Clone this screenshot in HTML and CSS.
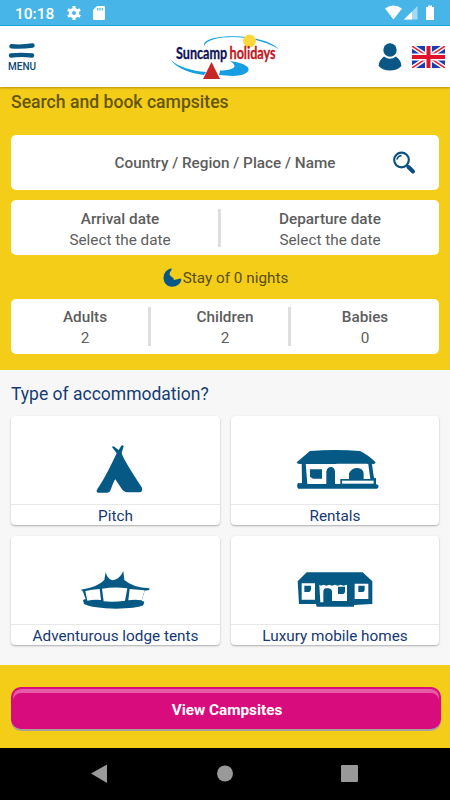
FILE: index.html
```html
<!DOCTYPE html>
<html lang="en">
<head>
    <meta charset="UTF-8">
    <meta name="viewport" content="width=device-width, initial-scale=1.0">
    <title>Suncamp holidays</title>
    <link rel="stylesheet" href="styles.css">
</head>
<body>
    <div class="status-bar">
        <span class="clock">10:18</span>
        <svg class="gear" width="14" height="14" viewBox="0 0 14 14">
            <circle cx="7" cy="7" r="3.6" fill="none" stroke="#fff" stroke-width="3.2"/>
            <path d="M7 0v3M7 11v3M.9 3.5l2.6 1.5M10.5 9l2.6 1.5M.9 10.5L3.5 9M10.5 5l2.6-1.5" stroke="#fff" stroke-width="3"/>
        </svg>
        <svg class="sd" width="12" height="14" viewBox="0 0 12 14">
            <path d="M4 0h7q1 0 1 1v12q0 1-1 1H1q-1 0-1-1V4z" fill="#fff"/>
            <path d="M4.8 2v2.5M7 2v2.5M9.3 2v2.5" stroke="#47b5e8" stroke-width="1.2"/>
        </svg>
        <svg class="signals" width="50" height="16" viewBox="0 0 50 16">
            <path d="M0 3.5Q8.300-2.500 17 3.500L8.500 14.500z" fill="#fff"/>
            <path d="M32.500 1v13.500H19z" fill="#a6daf4"/>
            <path d="M27 6.500v8h-8z" fill="#fff"/>
            <path d="M43 .5h4V2h2v12.500q0 .5-.5.500h-7q-.5 0-.5-.5V2h2z" fill="#fff"/>
        </svg>
    </div>

    <header class="header">
        <a class="menu">
            <svg width="28" height="16" viewBox="0 0 28 16" fill="none" stroke="#0a5685" stroke-width="4.400" stroke-linecap="round">
                <path d="M3.500 3.300Q14 4.200 24.500 2.500M3 12.500Q13 11.300 24 12.500"/>
            </svg>
            <span>MENU</span>
        </a>
        <svg class="logo" width="130" height="60" viewBox="0 0 130 60">
            <path d="M44 20C42 11 70 9 86 11S112 17 119 23C104 15 87 11 73 11S46 14 44 20" fill="#169ee2"/>
            <circle cx="89.500" cy="15" r="6.500" fill="#fcd83d"/>
            <path d="M11 34C18 41 32 45 46 46L44 49C27 47 14 40 11 34M60 44.500C74 44 79 41 70 35C86 37 93 43 86 47C80 51 69 50 59 49z" fill="#169ee2"/>
            <path d="M51.500 36l8.500 17H43z" fill="#c62828"/>
            <text transform="translate(16 33) scale(.765 1)" class="logo-text">Suncamp <tspan class="logo-red">holidays</tspan></text>
        </svg>
        <div class="header-right">
            <svg width="24" height="28" viewBox="0 0 24 28" fill="#0a5685">
                <circle cx="12" cy="7" r="6.700"/>
                <path d="M6 13.500Q12 18 18 13.500Q23 17 23.400 23Q19 27.500 12 27.500T.600 23Q1 17 6 13.500"/>
            </svg>
            <svg width="33" height="22" viewBox="0 0 33 22">
                <path d="M0 0h33v22H0z" fill="#173caf"/>
                <path d="M0 0l33 22M33 0L0 22" stroke="#fff" stroke-width="4.500"/>
                <path d="M0 0l33 22M33 0L0 22" stroke="#e2233b" stroke-width="1.500"/>
                <path d="M16.500 0v22M0 11h33" stroke="#fff" stroke-width="7"/>
                <path d="M16.500 0v22M0 11h33" stroke="#e0112b" stroke-width="4"/>
            </svg>
        </div>
    </header>

    <section class="search">
        <h1>Search and book campsites</h1>
        <div class="box place">
            <span>Country / Region / Place / Name</span>
            <svg class="magnifier" width="24" height="24" viewBox="0 0 24 24" fill="none" stroke="#0a5182">
                <circle cx="9.500" cy="9" r="7.300" stroke-width="2.200"/>
                <path d="M5 8Q6 5 9 4.800" stroke-width="1.500" stroke-linecap="round"/>
                <path d="M14.500 14l1.500 2" stroke-width="2"/>
                <path d="M16.500 16l4.500 4.500" stroke-width="4" stroke-linecap="round"/>
            </svg>
        </div>
        <div class="box cells dates">
            <div class="cell"><b>Arrival date</b><span>Select the date</span></div>
            <div class="cell"><b>Departure date</b><span>Select the date</span></div>
        </div>
        <div class="stay">
            <svg width="19" height="19" viewBox="0 0 19 19" fill="#0a5685">
                <path d="M8.500 .3Q1 2 .5 9.500C.5 15 4 18.500 9 18.700C14 18.700 17.500 16 18.500 11.500Q17.500 10 15.500 11L11 12Q10.800 9.500 8.700 9L6.500 6.500Q6.500 4 8.500 2z"/>
            </svg>
            <span>Stay of 0 nights</span>
        </div>
        <div class="box cells guests">
            <div class="cell"><b>Adults</b><span>2</span></div>
            <div class="cell"><b>Children</b><span>2</span></div>
            <div class="cell"><b>Babies</b><span>0</span></div>
        </div>
    </section>

    <section class="types">
        <h2>Type of accommodation?</h2>
        <div class="grid">
            <div class="card">
                <div class="picture">
                    <svg class="pitch" width="80" height="70" viewBox="0 0 240 210" fill="#075985">
                        <path d="M96 36q3-5 8 0l12 9 8-13q5-3 7 2l-6 19q1 14 61 105q3 13-8 14h-35q-12 0-19-12l-18-27q-5 6-13 29-3 11-12 11H54q-7-2-2-11Q75 130 110 55z"/>
                    </svg>
                </div>
                <div class="label">Pitch</div>
            </div>
            <div class="card">
                <div class="picture">
                    <svg class="rental" width="105" height="70" viewBox="0 0 315 210" fill="#075985">
                        <path d="M35 82Q55 65 75 48Q150 42 225 48Q250 60 272 82Q270 89 260 87H44Q36 87 35 82"/>
                        <path d="M50 83h12l5 64h57v-38q3-13 14-13 10 0 12 13v38h16v-15h90l-7-50h11l7 47h6v18l7 4q2 10-5 10H40q-7-7-1-17l12 1z"/>
                        <path d="M75 103h36v28H84l-9-6z"/>
                        <path d="M154 86h93l6 46h-88v15h-11z" fill="#fff"/>
                        <path d="M192 133v-18q8-16 25-16 19 2 19 18v16z"/>
                        <path d="M171 137h95v9h-95z" fill="#fff"/>
                    </svg>
                </div>
                <div class="label">Rentals</div>
            </div>
            <div class="card">
                <div class="picture">
                    <svg class="lodge" width="90" height="60" viewBox="0 0 270 180">
                        <path d="M35 89Q84 83 106 60L110 36Q114 56 130 61Q151 59 163 33L166 60Q192 83 241 85v5l-14 2-9 30 8 3-3 11Q200 146 142 146Q72 145 45 132l-3-12 8-3-9-24z" fill="#075985"/>
                        <path d="M49 93q20-5 43-6l4 33q-22-2-41 2zM99 86q38-7 76-1l-7 37q-32 5-64 2zM182 87l45 4-9 30q-20-4-40 0z" fill="#fff"/>
                    </svg>
                </div>
                <div class="label">Adventurous lodge tents</div>
            </div>
            <div class="card">
                <div class="picture">
                    <svg class="mobile" width="100" height="60" viewBox="0 0 300 180">
                        <path d="M38 64L65 37h168l29 27v68l-55 3v5H95l-2-8H42z" fill="#075985"/>
                        <path d="M50 70h40v49H50zM103 74l5 3 8-3 8 3 9-3 8 3 9-3 8 3 9-3 8 3 11-3v49h-45v-30q-2-8-10-8h-9q-6 1-7 8v34h-9zM209 71h41v46h-41z" fill="#fff"/>
                        <path d="M58 77h20v13l-5 6H58zM159 80h21v17l-5 5h-16zM220 77h19v14l-4 5h-15z" fill="#075985"/>
                    </svg>
                </div>
                <div class="label">Luxury mobile homes</div>
            </div>
        </div>
    </section>

    <div class="submit">
        <button>View Campsites</button>
    </div>

    <nav class="nav-bar">
        <svg width="450" height="52" viewBox="0 0 450 52" fill="#999">
            <path d="M91 25.500L107 16.500v18.500z"/>
            <circle cx="225" cy="25.500" r="8"/>
            <rect x="341" y="17" width="17" height="17" rx="1"/>
        </svg>
    </nav>
</body>
</html>
```
FILE: styles.css
```css
* {
    box-sizing: border-box;
}
body {
    margin: 0;
    width: 450px;
    height: 800px;
    overflow: hidden;
    font-family: Roboto, sans-serif;
    color: #5d5d5d;
    background-color: #f7f7f7;
}
svg {
    display: block;
}
.status-bar {
    height: 26px;
    display: flex;
    align-items: center;
    padding: 1px 15px 0 15px;
    background-color: #47b5e8;
    border-bottom: 1px solid #15a9e5;
    color: white;
}
.clock {
    width: 52px;
    padding-top: 2px;
    font-size: 15.5px;
    font-weight: 500;
}
.sd {
    margin-left: 12px;
}
.signals {
    margin-left: auto;
}
.header {
    height: 61px;
    display: grid;
    grid-template-columns: 1fr 130px 1fr;
    background-color: white;
    position: relative;
    box-shadow: 0 1px 2px rgba(120, 90, 0, 0.5);
}
.menu {
    width: 28px;
    margin: 17px 0 0 8px;
    display: flex;
    flex-direction: column;
    align-items: center;
}
.menu span {
    margin-top: 1px;
    font-size: 10px;
    line-height: 13px;
    font-weight: 500;
    color: #09477a;
}
.logo-text {
    font-family: Lato, sans-serif;
    font-size: 16.5px;
    font-weight: bold;
    word-spacing: -1px;
    fill: #0e1556;
    stroke: #0e1556;
    stroke-width: 0.3px;
}
.logo-red {
    fill: #c4151c;
    stroke: #c4151c;
}
.header-right {
    display: flex;
    justify-content: flex-end;
    gap: 10px;
    padding: 17px 5px 0 0;
}
.header-right svg + svg {
    margin-top: 3px;
}
.search {
    height: 283px;
    padding: 5px 11px 0;
    background-color: #f4cd18;
}
h1 {
    margin: 0 0 23px;
    font-size: 17.6px;
    line-height: 20px;
    font-weight: 500;
    color: #655507;
}
.box {
    height: 55px;
    background-color: white;
    border-radius: 5px;
    font-size: 15.3px;
}
.place {
    display: grid;
    grid-template-columns: 1fr auto 1fr;
    align-items: center;
    font-weight: 500;
}
.place span {
    grid-column: 2;
    padding-top: 1px;
}
.magnifier {
    justify-self: end;
    margin-right: 23px;
}
.dates {
    margin-top: 10px;
}
.cells {
    display: flex;
    align-items: center;
}
.cell {
    flex: 1;
    height: 39px;
    display: flex;
    flex-direction: column;
    align-items: center;
    line-height: 21px;
}
.cell + .cell {
    border-left: 3px solid #dedede;
}
.cell b {
    font-weight: 500;
}
.dates .cell {
    height: 38px;
    margin-top: 1px;
}
.dates .cell:first-child {
    flex: 0 0 207px;
    padding-left: 11px;
}
.guests .cell:first-child {
    flex: 0 0 137px;
    padding-left: 11px;
}
.guests .cell:nth-child(2) {
    flex: 0 0 140px;
    padding-left: 11px;
}
.stay {
    height: 44px;
    display: flex;
    align-items: center;
    justify-content: center;
    gap: 1px;
    padding: 1px 0 0 1px;
    font-size: 15.3px;
    color: #5a4d12;
}
.types {
    height: 295px;
    padding: 14px 11px 0;
}
h2 {
    margin: 0 0 12px;
    font-size: 17.5px;
    line-height: 20px;
    font-weight: 400;
    color: #153d74;
}
.grid {
    display: grid;
    grid-template-columns: 209px 208px;
    gap: 11px;
}
.card {
    height: 109px;
    background-color: white;
    border-radius: 4px;
    box-shadow: 0 1px 2px rgba(0, 0, 0, 0.3);
}
.picture {
    height: 89px;
    display: flex;
    justify-content: center;
    padding: 19px 8px 0 0;
    border-bottom: 1px solid #e8e8e8;
}
.picture .pitch {
    margin-left: 17px;
}
.picture .rental {
    margin-left: 13px;
}
.picture .lodge {
    margin: 5px 0 0 5px;
}
.picture .mobile {
    margin: 5px 0 0 7px;
}
.label {
    text-align: center;
    font-size: 15.3px;
    line-height: 23px;
    color: #153873;
}
.submit {
    height: 83px;
    padding: 22px 9px 0 11px;
    background-color: #f4cd18;
}
button {
    display: block;
    width: 430px;
    height: 42px;
    padding: 4px 0 0 2px;
    border: 2px solid #d80c7c;
    border-radius: 10px;
    background-color: #d80c7c;
    box-shadow: inset 0 4px 0 #e55ba5, 0 2px 0 #a9a29a;
    color: white;
    font-family: Roboto, sans-serif;
    font-size: 15.3px;
    font-weight: bold;
}
.nav-bar {
    height: 52px;
    background-color: black;
}
```
